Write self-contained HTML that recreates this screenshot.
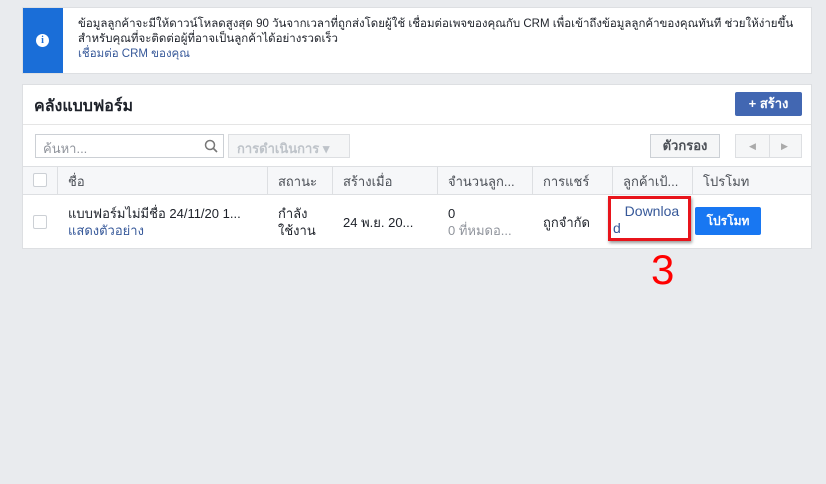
<!DOCTYPE html>
<html><head><meta charset="utf-8"><style>
*{box-sizing:border-box;margin:0;padding:0}
body{width:826px;height:484px;background:#e9ebee;font-family:"Liberation Sans",Tahoma,sans-serif;font-size:13px;color:#1d2129;position:relative;overflow:hidden}
.a{position:absolute}
.info{left:22px;top:7px;width:790px;height:67px;background:#fff;border:1px solid #dddfe2}
.strip{left:0;top:0;width:40px;height:65px;background:#1a6ed8}
.card{left:22px;top:84px;width:790px;height:165px;background:#fff;border:1px solid #dddfe2}
.th{top:81px;height:28px;border-right:1px solid #dddfe2;padding:5px 10px;color:#4b4f56;white-space:nowrap;overflow:hidden}
.td{top:110px;height:54px;padding:0 10px;display:flex;flex-direction:column;justify-content:center;white-space:nowrap;line-height:17px}
.cb{width:14px;height:14px;border:1px solid #ccd0d5;background:#fff;border-radius:2px}
</style></head><body>
<div class="a info">
 <div class="a strip"><div class="a" style="left:13px;top:26px;width:13px;height:13px;border-radius:50%;background:#fff;color:#1a6ed8;font:bold 10px 'Liberation Serif',serif;text-align:center;line-height:13px">i</div></div>
 <div class="a" style="left:55px;top:9px;font-size:11.5px;line-height:15px;color:#1d2129">ข้อมูลลูกค้าจะมีให้ดาวน์โหลดสูงสุด 90 วันจากเวลาที่ถูกส่งโดยผู้ใช้ เชื่อมต่อเพจของคุณกับ CRM เพื่อเข้าถึงข้อมูลลูกค้าของคุณทันที ช่วยให้ง่ายขึ้น<br>สำหรับคุณที่จะติดต่อผู้ที่อาจเป็นลูกค้าได้อย่างรวดเร็ว<br><span style="color:#365899">เชื่อมต่อ CRM ของคุณ</span></div>
</div>
<div class="a card">
 <div class="a" style="left:11px;top:9px;font-size:16px;font-weight:bold">คลังแบบฟอร์ม</div>
 <div class="a" style="left:712px;top:7px;width:67px;height:24px;background:#4267b2;color:#fff;font-weight:bold;border-radius:2px;text-align:center;line-height:24px">+ สร้าง</div>
 <div class="a" style="left:0;top:39px;width:788px;height:1px;background:#e5e5e5"></div>
 <div class="a" style="left:12px;top:49px;width:189px;height:24px;border:1px solid #ccd0d5;padding:3px 7px;color:#90949c">ค้นหา...
  <svg class="a" style="right:5px;top:4px" width="14" height="14" viewBox="0 0 14 14"><circle cx="6" cy="6" r="4.5" fill="none" stroke="#777" stroke-width="1.5"/><path d="M9.5 9.5L13 13" stroke="#777" stroke-width="1.6"/></svg></div>
 <div class="a" style="left:205px;top:49px;width:122px;height:24px;background:#f5f6f7;border:1px solid #dddfe2;color:#bec3c9;font-weight:bold;padding:3px 8px">การดำเนินการ ▾</div>
 <div class="a" style="left:627px;top:49px;width:70px;height:24px;background:#f5f6f7;border:1px solid #ccd0d5;font-weight:bold;text-align:center;line-height:21px;color:#4b4f56">ตัวกรอง</div>
 <div class="a" style="left:712px;top:49px;width:67px;height:24px;background:#f5f6f7;border:1px solid #dddfe2;color:#aaa;font-size:9px;line-height:22px"><span class="a" style="left:13px">◀</span><span class="a" style="left:33px;top:0;width:1px;height:22px;background:#dddfe2"></span><span class="a" style="left:45px">▶</span></div>
 <div class="a" style="left:0;top:81px;width:788px;height:29px;background:#f6f7f9;border-top:1px solid #dddfe2;border-bottom:1px solid #dddfe2"></div>
 <div class="a th" style="left:0;width:35px;padding-top:7px"><div class="cb"></div></div>
 <div class="a th" style="left:35px;width:210px">ชื่อ</div>
 <div class="a th" style="left:245px;width:65px">สถานะ</div>
 <div class="a th" style="left:310px;width:105px">สร้างเมื่อ</div>
 <div class="a th" style="left:415px;width:95px">จำนวนลูก...</div>
 <div class="a th" style="left:510px;width:80px">การแชร์</div>
 <div class="a th" style="left:590px;width:80px">ลูกค้าเป้...</div>
 <div class="a th" style="left:670px;width:118px;border:0">โปรโมท</div>
 <div class="a td" style="left:0;width:35px"><div class="cb"></div></div>
 <div class="a td" style="left:35px;width:210px"><div>แบบฟอร์มไม่มีชื่อ 24/11/20 1...</div><div style="color:#365899">แสดงตัวอย่าง</div></div>
 <div class="a td" style="left:245px;width:65px"><div>กำลัง</div><div>ใช้งาน</div></div>
 <div class="a td" style="left:310px;width:105px">24 พ.ย. 20...</div>
 <div class="a td" style="left:415px;width:95px"><div>0</div><div style="color:#90949c">0 ที่หมดอ...</div></div>
 <div class="a td" style="left:510px;width:80px">ถูกจำกัด</div>
 <div class="a" style="left:585px;top:111px;width:83px;height:45px;border:3px solid #e8141b;box-shadow:1px 2px 3px rgba(0,0,0,.4);color:#365899;font-size:14px;line-height:17px;padding:4px 0 0 2px">&nbsp;&nbsp;&nbsp;Downloa<br>d</div>
 <div class="a" style="left:672px;top:122px;width:66px;height:28px;background:#1877f2;color:#fff;font-weight:bold;font-size:12px;text-align:center;line-height:28px;border-radius:2px">โปรโมท</div>
</div>
<div class="a" style="left:651px;top:248px;color:#f00;font-size:42px;line-height:44px">3</div>
</body></html>
